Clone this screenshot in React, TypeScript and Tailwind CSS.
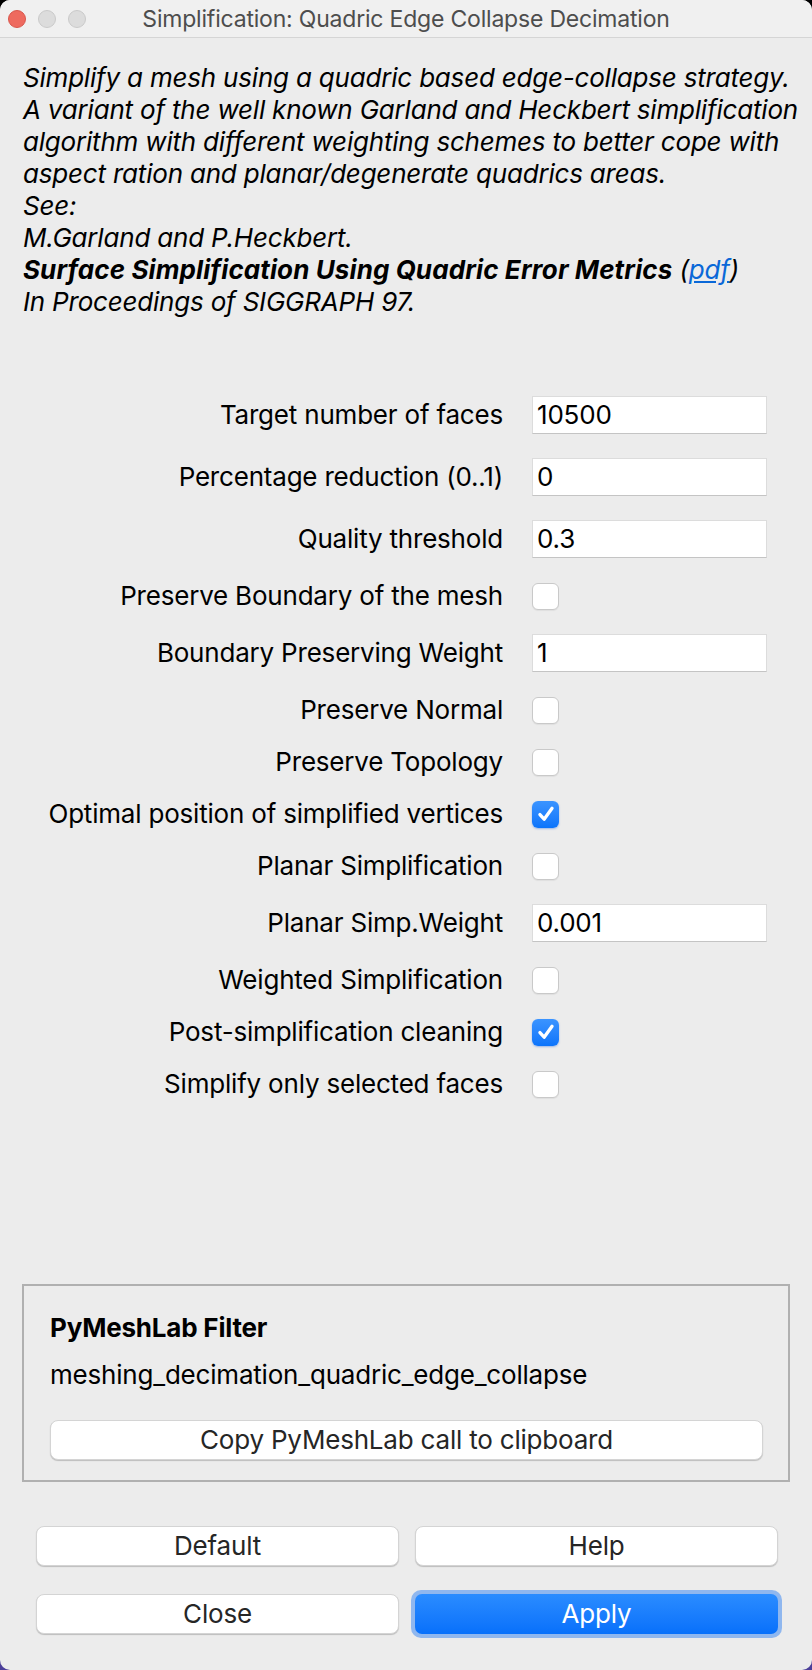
import React from "react";

type Row =
  | { kind: "text"; label: string; value: string }
  | { kind: "check"; label: string; checked: boolean };

const rows: Row[] = [
  { kind: "text", label: "Target number of faces", value: "10500" },
  { kind: "text", label: "Percentage reduction (0..1)", value: "0" },
  { kind: "text", label: "Quality threshold", value: "0.3" },
  { kind: "check", label: "Preserve Boundary of the mesh", checked: false },
  { kind: "text", label: "Boundary Preserving Weight", value: "1" },
  { kind: "check", label: "Preserve Normal", checked: false },
  { kind: "check", label: "Preserve Topology", checked: false },
  { kind: "check", label: "Optimal position of simplified vertices", checked: true },
  { kind: "check", label: "Planar Simplification", checked: false },
  { kind: "text", label: "Planar Simp.Weight", value: "0.001" },
  { kind: "check", label: "Weighted Simplification", checked: false },
  { kind: "check", label: "Post-simplification cleaning", checked: true },
  { kind: "check", label: "Simplify only selected faces", checked: false },
];

function Checkbox({ checked }: { checked: boolean }) {
  if (checked) {
    return (
      <div className="w-[27px] h-[27px] rounded-[6px] bg-gradient-to-b from-[#3b94ff] to-[#0a74fb] shadow-[0_1px_2px_rgba(0,80,220,0.35)] flex items-center justify-center">
        <svg width="22" height="22" viewBox="0 0 20 20" fill="none">
          <path d="M4.5 10.5l3.8 4.2L15.5 4.8" stroke="white" strokeWidth="3" strokeLinecap="round" strokeLinejoin="round" />
        </svg>
      </div>
    );
  }
  return <div className="w-[27px] h-[27px] rounded-[6px] bg-white border border-[#c9c9c9] shadow-[0_1px_1px_rgba(0,0,0,0.06)]" />;
}

function Button({ children, primary }: { children: React.ReactNode; primary?: boolean }) {
  if (primary) {
    return (
      <div className="rounded-[10px] p-[4px] bg-[#8fb7ef] -m-[4px]">
        <div className="h-[40px] rounded-[7px] bg-gradient-to-b from-[#2a8cff] to-[#0770fb] text-white flex items-center justify-center">
          {children}
        </div>
      </div>
    );
  }
  return (
    <div className="h-[40px] rounded-[8px] bg-white border border-[#d4d4d4] shadow-[0_1px_1px_rgba(0,0,0,0.2)] text-[#262626] flex items-center justify-center">
      {children}
    </div>
  );
}

export default function App() {
  return (
    <div className="w-[812px] h-[1670px] bg-gradient-to-b from-black to-[#4b3f99] font-['Inter',sans-serif] text-[26px] leading-[32px] tracking-[-0.2px] text-black">
      <div className="w-full h-full rounded-[10px] overflow-hidden bg-[#ececec] flex flex-col">
        {/* title bar */}
        <div className="relative h-[38px] shrink-0 bg-[#f0f0f0] border-b border-[#d5d5d5] flex items-center justify-center">
          <div className="absolute left-[8px] top-[10px] flex gap-[12px]">
            <span className="w-[18px] h-[18px] rounded-full bg-[#ee6a5f] border border-[#d8564c]" />
            <span className="w-[18px] h-[18px] rounded-full bg-[#dcdcdc] border border-[#c9c9c9]" />
            <span className="w-[18px] h-[18px] rounded-full bg-[#dcdcdc] border border-[#c9c9c9]" />
          </div>
          <span className="text-[23px] text-[#4d4d4d]">Simplification: Quadric Edge Collapse Decimation</span>
        </div>

        {/* description */}
        <div className="pt-[24px] pl-[23px] italic">
          <p>Simplify a mesh using a quadric based edge-collapse strategy.</p>
          <p>A variant of the well known Garland and Heckbert simplification</p>
          <p>algorithm with different weighting schemes to better cope with</p>
          <p>aspect ration and planar/degenerate quadrics areas.</p>
          <p>See:</p>
          <p>M.Garland and P.Heckbert.</p>
          <p>
            <b className="tracking-[0.1px]">Surface Simplification Using Quadric Error Metrics</b> (
            <span className="text-[#0a68d8] underline">pdf</span>)
          </p>
          <p>In Proceedings of SIGGRAPH 97.</p>
        </div>

        {/* parameters */}
        <div className="mt-[66px] flex flex-col">
          {rows.map((r) => (
            <div key={r.label} className={`flex items-center ${r.kind === "text" ? "h-[62px]" : "h-[52px]"}`}>
              <div className="w-[503px] text-right whitespace-nowrap">{r.label}</div>
              <div className="ml-[29px] w-[235px]">
                {r.kind === "text" ? (
                  <div className="h-[38px] bg-white border border-[#dcdcdc] border-b-[#c4c4c4] px-[4px] flex items-center">
                    {r.value}
                  </div>
                ) : (
                  <Checkbox checked={r.checked} />
                )}
              </div>
            </div>
          ))}
        </div>

        <div className="flex-1" />

        {/* pymeshlab box */}
        <div className="mx-[22px] border-2 border-[#b0b0b0] pt-[26px] pb-[20px] pl-[26px] pr-[25px]">
          <div className="font-bold">PyMeshLab Filter</div>
          <div className="mt-[15px]">meshing_decimation_quadric_edge_collapse</div>
          <div className="mt-[29px]">
            <Button>Copy PyMeshLab call to clipboard</Button>
          </div>
        </div>

        {/* bottom buttons */}
        <div className="mt-[44px] mb-[36px] pl-[36px] pr-[34px] grid grid-cols-2 gap-x-[16px] gap-y-[28px]">
          <Button>Default</Button>
          <Button>Help</Button>
          <Button>Close</Button>
          <Button primary>Apply</Button>
        </div>
      </div>
    </div>
  );
}
